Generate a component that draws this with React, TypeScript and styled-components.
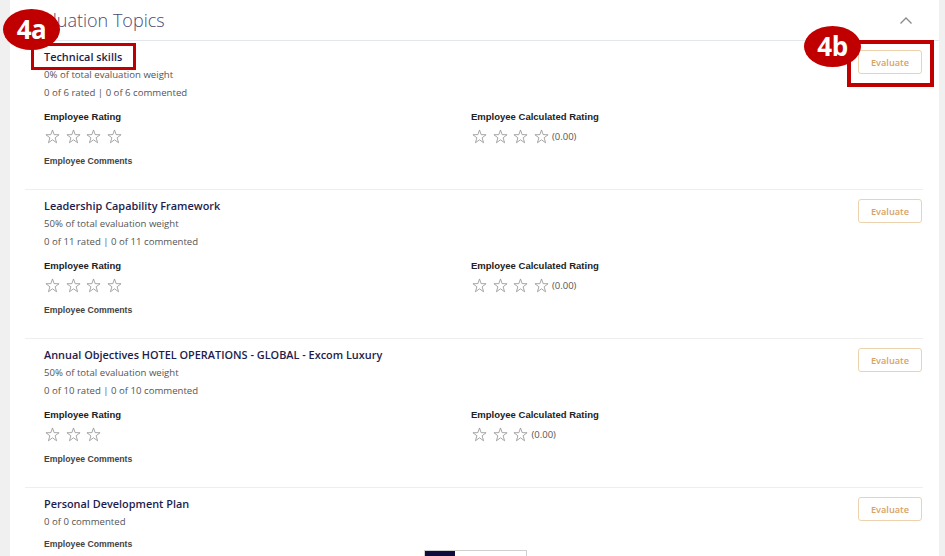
import React from "react";
import styled, { createGlobalStyle } from "styled-components";

const Global = createGlobalStyle`
  html, body { margin: 0; padding: 0; height: 100%; overflow: hidden; }
  body { background: #f0f0f0; font-family: "Open Sans", "Liberation Sans", sans-serif; }
`;

const Page = styled.div`
  position: relative;
  height: 556px;
  overflow: hidden;
  padding: 0 6px 0 10px;
`;

const Panel = styled.div`
  background: #ffffff;
  min-height: 556px;
`;

const Header = styled.div`
  display: flex;
  align-items: center;
  justify-content: space-between;
  height: 40px;
  padding: 0 27px 0 15px;
  border-bottom: 1px solid #e3e8ef;
`;

const HeaderTitle = styled.div`
  font-family: "Open Sans", sans-serif;
  font-weight: 300;
  font-size: 18px;
  color: #4a4a72;
`;

const Topics = styled.div`
  padding: 0 16px 0 15px;
`;

const Topic = styled.div`
  padding: 7px 1px 21px 19px;
  border-bottom: 1px solid #eeeeee;
`;

const TopRow = styled.div`
  display: flex;
  justify-content: space-between;
  align-items: flex-start;
`;

const Title = styled.div`
  font-family: "Open Sans", sans-serif;
  font-weight: 600;
  font-size: 10.9px;
  line-height: 18px;
  color: #1d1d4d;
`;

const Sub = styled.div`
  font-family: "Open Sans", sans-serif;
  font-size: 9.6px;
  line-height: 18px;
  color: #555555;
`;

const EvalButton = styled.button`
  margin-top: 2px;
  width: 64px;
  height: 24px;
  background: #ffffff;
  border: 1px solid #ecd3ad;
  border-radius: 3px;
  color: #d7a266;
  font-family: "Open Sans", sans-serif;
  font-size: 9.2px;
  font-weight: 600;
  padding: 0;
`;

const RatingGrid = styled.div`
  display: grid;
  grid-template-columns: 427px 1fr;
  margin-top: 8px;
`;

const Label = styled.div`
  font-family: "Liberation Sans", Arial, sans-serif;
  font-weight: 700;
  font-size: 9.5px;
  line-height: 14px;
  color: #222222;
`;

const Stars = styled.div`
  display: flex;
  align-items: center;
  gap: 5.5px;
  height: 20px;
  margin-top: 2px;
  padding-left: 1px;
`;

const Score = styled.span`
  font-family: "Open Sans", sans-serif;
  font-size: 9.5px;
  color: #555555;
  margin-left: -2px;
`;

const Comments = styled.div<{ $gap: number }>`
  margin-top: ${(p) => p.$gap}px;
  font-family: "Liberation Sans", Arial, sans-serif;
  font-weight: 700;
  font-size: 8.7px;
  line-height: 14px;
  color: #444444;
`;

const Badge = styled.div<{ $x: number; $y: number }>`
  position: absolute;
  left: ${(p) => p.$x}px;
  top: ${(p) => p.$y}px;
  width: 57px;
  height: 41px;
  border-radius: 50%;
  background: #c00000;
  color: #ffffff;
  font-family: "Open Sans", "Liberation Sans", sans-serif;
  font-weight: 700;
  font-size: 26px;
  line-height: 41px;
  text-align: center;
  z-index: 3;
  letter-spacing: -0.5px;
`;

const Frame = styled.div<{ $x: number; $y: number; $w: number; $h: number; $b: number }>`
  position: absolute;
  left: ${(p) => p.$x}px;
  top: ${(p) => p.$y}px;
  width: ${(p) => p.$w}px;
  height: ${(p) => p.$h}px;
  border: ${(p) => p.$b}px solid #c00000;
  box-sizing: border-box;
  z-index: 2;
`;

const Floater = styled.div`
  position: absolute;
  left: 424px;
  top: 550px;
  width: 103px;
  height: 12px;
  display: flex;
  border: 1px solid #cfcfcf;
  box-sizing: border-box;
  background: #ffffff;
`;

const FloaterDark = styled.div`
  width: 30px;
  background: #0d0c3b;
`;

const Star = () => (
  <svg width="15" height="15" viewBox="0 0 24 24" fill="none" stroke="#999999" strokeWidth="1.4" strokeLinejoin="miter">
    <polygon points="12,1.5 14.6,9 22.5,9.2 16.2,14 18.5,22 12,17.3 5.5,22 7.8,14 1.5,9.2 9.4,9" />
  </svg>
);

const StarRow = ({ n, score }: { n: number; score?: string }) => (
  <Stars>
    {Array.from({ length: n }).map((_, i) => (
      <Star key={i} />
    ))}
    {score && <Score>{score}</Score>}
  </Stars>
);

type TopicData = {
  title: string;
  weight?: string;
  counts: string;
  stars?: number;
};

const topics: TopicData[] = [
  { title: "Technical skills", weight: "0% of total evaluation weight", counts: "0 of 6 rated | 0 of 6 commented", stars: 4 },
  { title: "Leadership Capability Framework", weight: "50% of total evaluation weight", counts: "0 of 11 rated | 0 of 11 commented", stars: 4 },
  { title: "Annual Objectives HOTEL OPERATIONS - GLOBAL - Excom Luxury", weight: "50% of total evaluation weight", counts: "0 of 10 rated | 0 of 10 commented", stars: 3 },
  { title: "Personal Development Plan", counts: "0 of 0 commented" },
];

const Chevron = () => (
  <svg width="12" height="7" viewBox="0 0 12 7" fill="none" stroke="#8a8a8a" strokeWidth="1.3">
    <polyline points="0.5,6.5 6,1 11.5,6.5" />
  </svg>
);

export default function App() {
  return (
    <>
      <Global />
      <Page>
        <Panel>
          <Header>
            <HeaderTitle>Evaluation Topics</HeaderTitle>
            <Chevron />
          </Header>
          <Topics>
            {topics.map((t) => (
              <Topic key={t.title}>
                <TopRow>
                  <div>
                    <Title>{t.title}</Title>
                    {t.weight && <Sub>{t.weight}</Sub>}
                    <Sub>{t.counts}</Sub>
                  </div>
                  <EvalButton>Evaluate</EvalButton>
                </TopRow>
                {t.stars ? (
                  <>
                    <RatingGrid>
                      <div>
                        <Label>Employee Rating</Label>
                        <StarRow n={t.stars} />
                      </div>
                      <div>
                        <Label>Employee Calculated Rating</Label>
                        <StarRow n={t.stars} score="(0.00)" />
                      </div>
                    </RatingGrid>
                    <Comments $gap={8}>Employee Comments</Comments>
                  </>
                ) : (
                  <Comments $gap={6}>Employee Comments</Comments>
                )}
              </Topic>
            ))}
          </Topics>
        </Panel>
        <Frame $x={31} $y={43} $w={105} $h={27} $b={3} />
        <Badge $x={3} $y={9}>4a</Badge>
        <Frame $x={847} $y={40} $w={87} $h={47} $b={4} />
        <Badge $x={804} $y={26}>4b</Badge>
        <Floater>
          <FloaterDark />
        </Floater>
      </Page>
    </>
  );
}
